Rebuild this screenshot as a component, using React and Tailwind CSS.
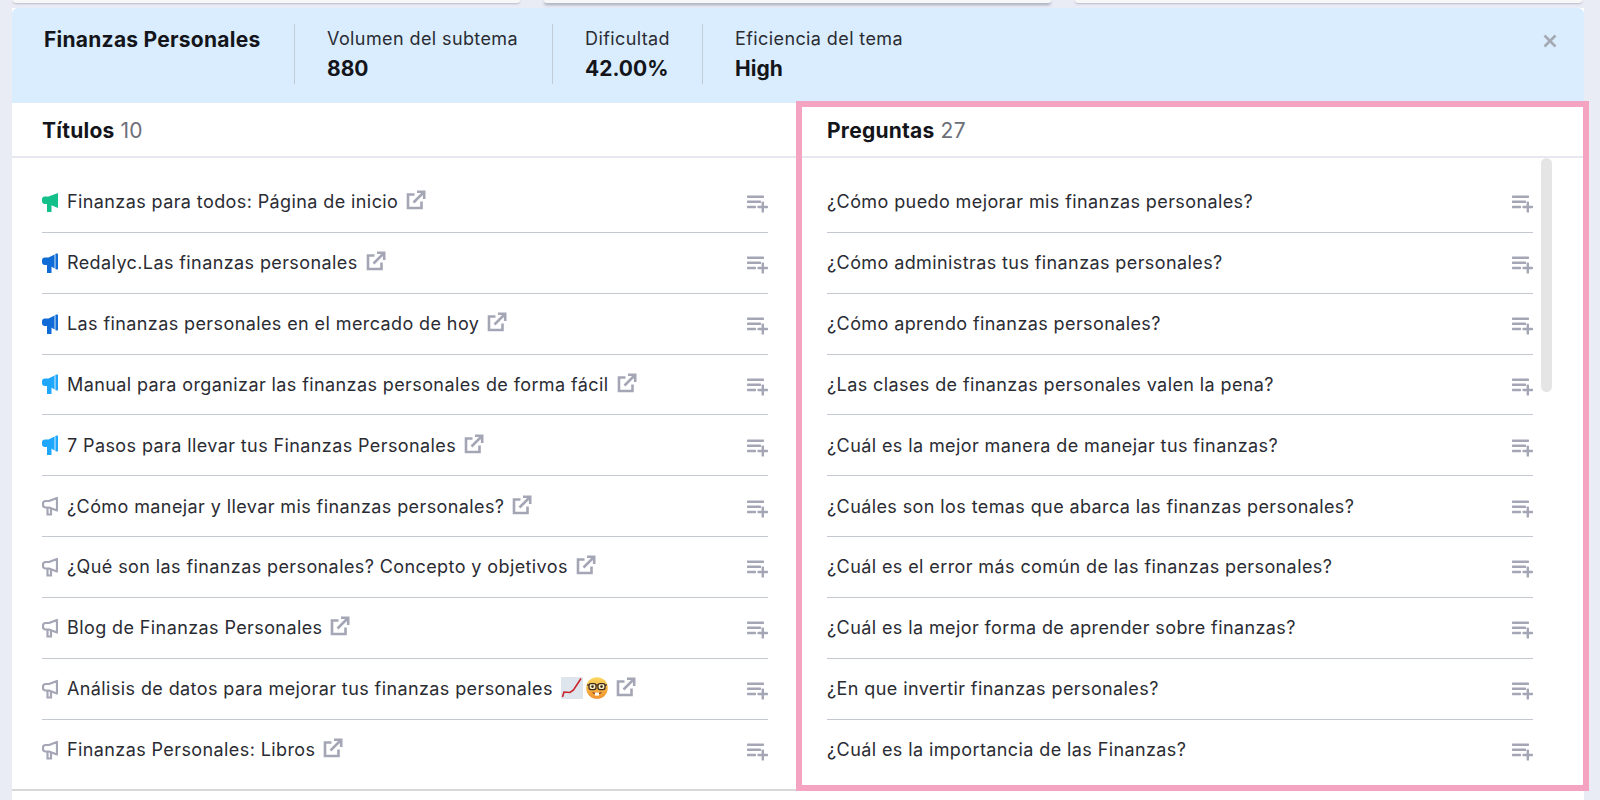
const titulos = [
  { texto: "Finanzas para todos: Página de inicio", nivel: "verde" },
  { texto: "Redalyc.Las finanzas personales", nivel: "azul" },
  { texto: "Las finanzas personales en el mercado de hoy", nivel: "azul" },
  { texto: "Manual para organizar las finanzas personales de forma fácil", nivel: "celeste" },
  { texto: "7 Pasos para llevar tus Finanzas Personales", nivel: "celeste" },
  { texto: "¿Cómo manejar y llevar mis finanzas personales?", nivel: "gris" },
  { texto: "¿Qué son las finanzas personales? Concepto y objetivos", nivel: "gris" },
  { texto: "Blog de Finanzas Personales", nivel: "gris" },
  { texto: "Análisis de datos para mejorar tus finanzas personales", nivel: "gris", emojis: true },
  { texto: "Finanzas Personales: Libros", nivel: "gris" },
];

const preguntas = [
  "¿Cómo puedo mejorar mis finanzas personales?",
  "¿Cómo administras tus finanzas personales?",
  "¿Cómo aprendo finanzas personales?",
  "¿Las clases de finanzas personales valen la pena?",
  "¿Cuál es la mejor manera de manejar tus finanzas?",
  "¿Cuáles son los temas que abarca las finanzas personales?",
  "¿Cuál es el error más común de las finanzas personales?",
  "¿Cuál es la mejor forma de aprender sobre finanzas?",
  "¿En que invertir finanzas personales?",
  "¿Cuál es la importancia de las Finanzas?",
];

const coloresMegafono = {
  verde: "text-[#14c08a]",
  azul: "text-[#0f6bd6]",
  celeste: "text-[#1ea7fd]",
};

function Megafono({ nivel }) {
  if (nivel === "gris") {
    return (
      <svg viewBox="0 0 16 20" className="w-4 h-5 shrink-0 text-[#a4a6b5]" fill="none" stroke="currentColor" strokeWidth="2.2">
        <path d="M15 2v12.5L7 11.5H3.5A2.5 2.5 0 0 1 1 9V7.5A2.5 2.5 0 0 1 3.5 5H7z" strokeLinejoin="round" />
        <path d="M5.5 11.5v7H9v-6" />
      </svg>
    );
  }
  return (
    <svg viewBox="0 0 16 20" className={`w-4 h-5 shrink-0 ${coloresMegafono[nivel]}`} fill="currentColor">
      {nivel === "verde" ? (
        <path d="M16 1v15L6.5 12H3a3 3 0 0 1-3-3V7.5a3 3 0 0 1 3-3h3.5z" />
      ) : (
        <>
          <path d="M12.6 1.5v14L6.5 12H3a3 3 0 0 1-3-3V7.5a3 3 0 0 1 3-3h3.5z" />
          <rect x="13.4" y="0.5" width="2.6" height="16" rx="0.8" />
        </>
      )}
      <path d="M5 12h4.5v8H5z" />
    </svg>
  );
}

function EnlaceExterno() {
  return (
    <svg viewBox="0 0 20 20" className="w-5 h-5 shrink-0 text-[#a4a6b5] -mt-[3px]" fill="none" stroke="currentColor" strokeWidth="2.6">
      <path d="M8.5 4.5H2v13.5h13.5v-6.5" />
      <path d="M7.5 12.5 17.5 2.5M11 1.8h7.2V9" />
    </svg>
  );
}

function Agregar() {
  return (
    <svg viewBox="0 0 21 18" className="w-[21px] h-[18px] shrink-0 text-[#a4a6b5] mt-[5px]" fill="currentColor">
      <rect x="0" y="0.5" width="17" height="2.4" rx="0.6" />
      <rect x="0" y="5.6" width="14" height="2.4" rx="0.6" />
      <rect x="0" y="10.8" width="9" height="2.4" rx="0.6" />
      <rect x="10.5" y="10.8" width="10.5" height="2.4" rx="0.6" />
      <rect x="14.6" y="6.6" width="2.4" height="11" rx="0.6" />
    </svg>
  );
}

function EmojiGrafico() {
  return (
    <svg viewBox="0 0 22 22" className="w-[22px] h-[22px] shrink-0">
      <rect width="22" height="22" fill="#dfe5ec" />
      <path d="M1.5 20 3 15l6 .5L12.5 13 20 1.5" fill="none" stroke="#c9242b" strokeWidth="1.6" />
    </svg>
  );
}

function EmojiNerd() {
  return (
    <svg viewBox="0 0 22 22" className="w-[22px] h-[22px] shrink-0">
      <defs>
        <linearGradient id="caraNerd" x1="0" y1="0" x2="0" y2="1">
          <stop offset="0" stopColor="#fcd75e" />
          <stop offset="1" stopColor="#f0922f" />
        </linearGradient>
      </defs>
      <circle cx="11" cy="11" r="10.8" fill="url(#caraNerd)" />
      <path d="M1 8h20" stroke="#3a2a1c" strokeWidth="1.1" />
      <rect x="3" y="6.6" width="7" height="6" rx="2" fill="#fff1c4" stroke="#3a2a1c" strokeWidth="1.3" />
      <rect x="12" y="6.6" width="7" height="6" rx="2" fill="#fff1c4" stroke="#3a2a1c" strokeWidth="1.3" />
      <circle cx="6.5" cy="9.6" r="1.3" fill="#3a2a1c" />
      <circle cx="15.5" cy="9.6" r="1.3" fill="#3a2a1c" />
      <path d="M6 15c3 1.2 7 1.2 10 0-1 3-9 3-10 0z" fill="#7a3a1f" />
      <rect x="9" y="15.6" width="4" height="3" fill="#fff" />
    </svg>
  );
}

function Metrica({ titulo, valor, ancho }) {
  return (
    <div className={`${ancho} pl-[32px] h-[60px] border-l border-[#c3ccd6]`}>
      <div className="text-[18px] tracking-[0.4px] leading-[30px] text-[#2b2c33]">{titulo}</div>
      <div className="text-[21px] leading-[30px] font-bold text-[#14151a]">{valor}</div>
    </div>
  );
}

function Encabezado({ titulo, total, clase }) {
  return (
    <div className={`h-[55px] pt-[3px] border-b-2 border-[#e8e9f0] flex items-center text-[21px] tracking-[0.25px] ${clase}`}>
      <span className="font-bold text-[#14151a]">{titulo}</span>
      <span className="ml-[6px] text-[#6c6e79]">{total}</span>
    </div>
  );
}

function Fila({ children, clase }) {
  return (
    <div className={`h-[60.85px] flex items-center justify-between border-b border-[#c4c8d2] ${clase}`}>
      {children}
    </div>
  );
}

function App() {
  return (
    <div className="h-[800px] overflow-hidden bg-[#e9ebf5] font-['Inter',sans-serif]">
      <div className="h-[8px] pl-[13px] pr-[18px] flex gap-[24px]">
        <div className="w-[507px] h-[3px] bg-[#f7f7f8] rounded-b shadow-[0_1px_2px_#b9bcc8]"></div>
        <div className="w-[507px] h-[3px] bg-[#f7f7f8] rounded-b shadow-[0_2px_3px_#a0a8b8]"></div>
        <div className="w-[507px] h-[3px] bg-[#f7f7f8] rounded-b shadow-[0_1px_2px_#b9bcc8]"></div>
      </div>

      <div className="relative ml-[12px] w-[1572px] h-[792px] bg-white">
        <div className="h-[95px] bg-[#d9edfe] rounded-t-md flex pt-[16px] relative">
          <div className="w-[282px] pl-[32px] pt-[1px] text-[21px] tracking-[0.25px] leading-[30px] font-bold text-[#14151a]">
            Finanzas Personales
          </div>
          <Metrica titulo="Volumen del subtema" valor="880" ancho="w-[258px]" />
          <Metrica titulo="Dificultad" valor="42.00%" ancho="w-[150px]" />
          <Metrica titulo="Eficiencia del tema" valor="High" ancho="w-[300px]" />
          <span className="absolute right-[27px] top-[26px] text-[#a4a9b4]">
            <svg viewBox="0 0 14 14" className="w-[14px] h-[14px]" stroke="currentColor" strokeWidth="2.6" fill="none">
              <path d="M1.5 1.5l11 11M12.5 1.5l-11 11" />
            </svg>
          </span>
        </div>

        <div className="h-[688px] flex border-b-2 border-[#d8d8d8]">
          <div className="w-[784px]">
            <Encabezado titulo="Títulos" total="10" clase="pl-[30px]" />
            <div className="pt-[14px] pl-[30px] pr-[28px]">
              {titulos.map((titulo, i) => (
                <Fila key={titulo.texto} clase={i === titulos.length - 1 ? "border-transparent" : ""}>
                  <div className="flex items-center text-[18px] tracking-[0.4px] text-[#2b2c33]">
                    <Megafono nivel={titulo.nivel} />
                    <span className="ml-[9px]">{titulo.texto}</span>
                    {titulo.emojis && (
                      <span className="flex ml-[8px] gap-[3px] -mt-[2px]">
                        <EmojiGrafico />
                        <EmojiNerd />
                      </span>
                    )}
                    <span className="ml-[8px]">
                      <EnlaceExterno />
                    </span>
                  </div>
                  <Agregar />
                </Fila>
              ))}
            </div>
          </div>

          <div className="flex-1 relative">
            <Encabezado titulo="Preguntas" total="27" clase="pl-[31px]" />
            <div className="pt-[14px] pl-[31px] pr-[51px]">
              {preguntas.map((pregunta, i) => (
                <Fila key={pregunta} clase={i === preguntas.length - 1 ? "border-transparent" : ""}>
                  <span className="text-[18px] tracking-[0.4px] text-[#2b2c33]">{pregunta}</span>
                  <Agregar />
                </Fila>
              ))}
            </div>
            {/* barra de scroll sobre la lista */}
            <div className="absolute left-[745px] top-[55px] w-[11px] h-[234px] rounded-full bg-[#e5e5e5]"></div>
          </div>
        </div>

        {/* marco rosa de anotacion */}
        <div className="absolute left-[784px] top-[93px] w-[793px] h-[690px] border-[6px] border-[#f4a3c0] pointer-events-none"></div>
      </div>
    </div>
  );
}

export default App;
